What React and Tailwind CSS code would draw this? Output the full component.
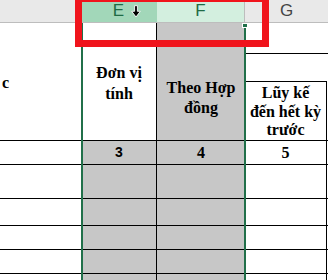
import React from "react";

// Column header + fragment of the sheet with E:F selected and a red highlight box
const SERIF = { fontFamily: '"Liberation Serif", "Times New Roman", serif' };
const SANS = { fontFamily: '"Liberation Sans", Arial, sans-serif' };

const ROWS = [
  { h: "h-[24px]", d: ["3", "4", "5"] },
  { h: "h-[34px]" },
  { h: "h-[27px]" },
  { h: "h-[24px]" },
  { h: "h-[24px]" },
  { h: "h-[40px]" },
];

function DownCursor() {
  return (
    <svg width="10" height="13" viewBox="0 0 10 13" className="absolute left-[131px] top-[5px]">
      <path d="M3.6 0.7h2.8v5.6h2.9l-4.3 5.7-4.3-5.7h2.9z" fill="#000" stroke="#fff" strokeWidth="0.9" />
    </svg>
  );
}

export default function App() {
  return (
    <div className="relative w-[328px] h-[280px] overflow-hidden bg-white">
      {/* Column headers */}
      <div className="flex h-[23px] border-b border-[#bdbdbd]" style={SANS}>
        <div className="w-[82px] bg-[#e9e9e9]" />
        <div className="w-[75px] bg-[#a2d7b9] flex items-center justify-center text-[17px] text-[#1f6b45] pr-[2px]">E</div>
        <div className="w-[87px] bg-[#d3efdf] flex items-center justify-center text-[17px] text-[#1f6b45]">F</div>
        <div className="flex-1 bg-[#e9e9e9] border-l border-[#bdbdbd] flex items-center justify-center text-[17px] text-[#444]">G</div>
      </div>

      {/* Title block */}
      <div className="flex h-[117px] font-bold text-[16px] text-black" style={SERIF}>
        <div className="w-[82px] flex items-center pl-[2px] pt-[2px]">c</div>
        <div className="w-[75px] border-r border-black flex flex-col items-center justify-center leading-[21px] pt-[2px]">
          <span>Đơn vị</span>
          <span>tính</span>
        </div>
        <div className="w-[88px] bg-[#c7c7c7] flex flex-col">
          <div className="h-[30px]" />
          <div className="flex-1 flex flex-col items-center justify-center leading-[20px] pt-[3px]">
            <span>Theo Hợp</span>
            <span>đồng</span>
          </div>
        </div>
        <div className="flex-1 flex flex-col">
          <div className="h-[30px]" />
          <div className="h-[28px] border-t border-black" />
          <div className="flex-1 w-[82px] border-t border-r border-black flex flex-col items-center justify-center leading-[18.5px] pt-[2px]">
            <span>Lũy kế</span>
            <span>đến hết kỳ</span>
            <span>trước</span>
          </div>
        </div>
      </div>

      {/* Data rows */}
      {ROWS.map((r, i) => (
        <div key={i} className={`flex ${r.h} border-t border-black font-bold`}>
          <div className="w-[82px]" />
          <div className="w-[75px] bg-[#c7c7c7] border-r border-black flex items-center justify-center text-[14px]" style={SANS}>
            {r.d && r.d[0]}
          </div>
          <div className="w-[88px] bg-[#c7c7c7] flex items-center justify-center text-[16px]" style={SERIF}>
            {r.d && r.d[1]}
          </div>
          <div className="w-[82px] border-r border-black flex items-center justify-center text-[16px]" style={SERIF}>
            {r.d && r.d[2]}
          </div>
        </div>
      ))}

      {/* Selection outline of columns E:F */}
      <div className="absolute left-[81px] top-[23px] w-[165px] h-[300px] border-x-2 border-[#21704a]" />
      <div className="absolute left-[242px] top-[23px] w-[6px] h-[5px] bg-[#21704a] border border-white" />

      <DownCursor />

      {/* Red highlight box */}
      <div className="absolute left-[75px] top-[-5px] w-[194px] h-[52px] border-[7px] border-[#f0141c]" />
    </div>
  );
}
